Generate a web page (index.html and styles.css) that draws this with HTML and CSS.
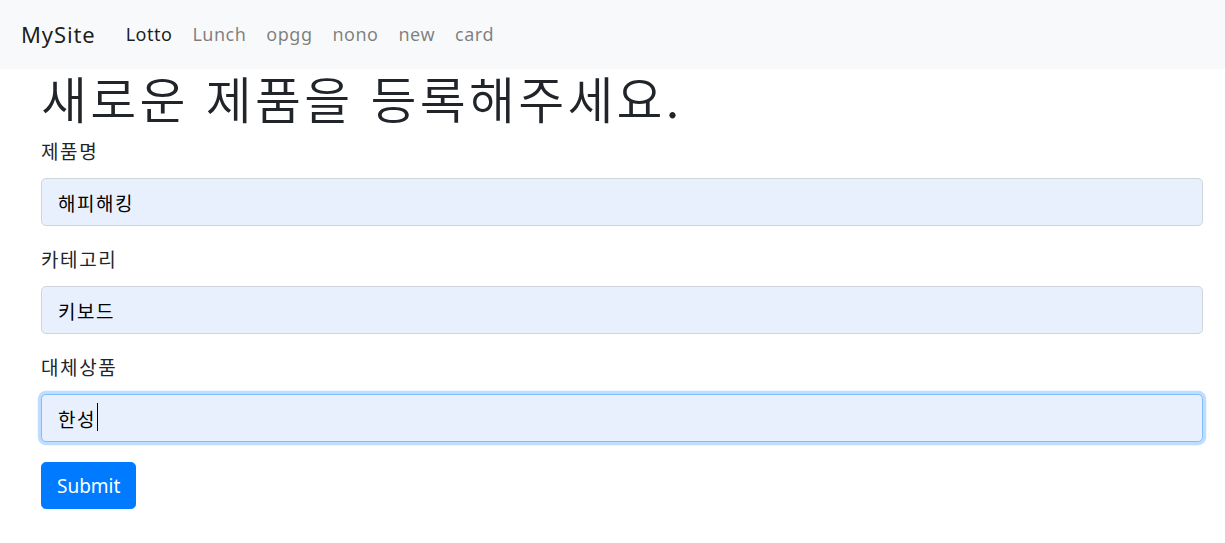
FILE: index.html
```html
<!DOCTYPE html>
<html lang="ko">
<head>
<meta charset="utf-8">
<title>MySite</title>
<link rel="stylesheet" href="styles.css">
</head>
<body>
<nav class="navbar">
  <a class="brand" href="#">MySite</a>
  <ul class="nav-links">
    <li><a class="active" href="#">Lotto</a></li>
    <li><a href="#">Lunch</a></li>
    <li><a href="#">opgg</a></li>
    <li><a href="#">nono</a></li>
    <li><a href="#">new</a></li>
    <li><a href="#">card</a></li>
  </ul>
</nav>
<main class="container">
  <h1 class="title">새로운 제품을 등록해주세요.</h1>
  <form class="form">
    <div class="form-group">
      <label class="label" for="name">제품명</label>
      <input class="control" id="name" type="text" value="해피해킹">
    </div>
    <div class="form-group">
      <label class="label" for="category">카테고리</label>
      <input class="control" id="category" type="text" value="키보드">
    </div>
    <div class="form-group">
      <label class="label" for="alt">대체상품</label>
      <div class="control-wrap">
        <input class="control focused" id="alt" type="text" value="한성">
        <span class="caret"></span>
      </div>
    </div>
    <button class="btn" type="button">Submit</button>
  </form>
</main>
</body>
</html>
```

FILE: styles.css
```css
* { box-sizing: border-box; }
html, body { margin: 0; padding: 0; }
body {
  font-family: "Segoe UI", "Noto Sans", "Noto Sans CJK KR", sans-serif;
  font-size: 16px;
  line-height: 1.5;
  color: #212529;
  background: #fff;
}
.navbar {
  height: 69px;
  background: #f8f9fa;
  display: flex;
  align-items: center;
  padding: 0 21px;
}
.brand {
  font-size: 22px;
  letter-spacing: 0.9px;
  color: rgba(0,0,0,.9);
  text-decoration: none;
  margin-right: 30px;
}
.nav-links {
  list-style: none;
  margin: 0;
  padding: 0;
  display: flex;
  gap: 20px;
}
.nav-links a {
  display: block;
  color: rgba(0,0,0,.5);
  text-decoration: none;
  font-size: 18px;
  letter-spacing: 0.5px;
}
.nav-links a.active { color: rgba(0,0,0,.9); }
.container {
  padding: 0 22px 0 41px;
}
.title {
  margin: 0;
  font-family: "Noto Sans CJK KR", sans-serif;
  font-size: 50px;
  font-weight: 350;
  letter-spacing: 3.2px;
  line-height: 56px;
}
.form { margin-top: 13px; }
.form-group { margin-bottom: 20px; }
.label {
  display: block;
  font-family: "Noto Sans CJK KR", sans-serif;
  font-size: 19px;
  letter-spacing: 1.6px;
  line-height: 26px;
  margin-bottom: 14px;
}
.control-wrap { position: relative; }
.control {
  display: block;
  width: 100%;
  height: 48px;
  padding: 0 16px;
  font-family: "Noto Sans CJK KR", sans-serif;
  font-size: 19px;
  letter-spacing: 1.5px;
  color: #000;
  background: #e8f0fe;
  border: 1px solid #ced4da;
  border-radius: 4.8px;
  outline: none;
}
.control.focused {
  border-color: #80bdff;
  box-shadow: 0 0 0 3.2px rgba(0,123,255,.25);
}
.caret {
  position: absolute;
  left: 56px;
  top: 9px;
  width: 1px;
  height: 28px;
  background: #000;
}
.btn {
  display: inline-block;
  height: 47px;
  padding: 0 15px;
  font-family: "Segoe UI", "Noto Sans", sans-serif;
  font-size: 19px;
  color: #fff;
  background: #007bff;
  border: 1px solid #007bff;
  border-radius: 4.8px;
}
```
